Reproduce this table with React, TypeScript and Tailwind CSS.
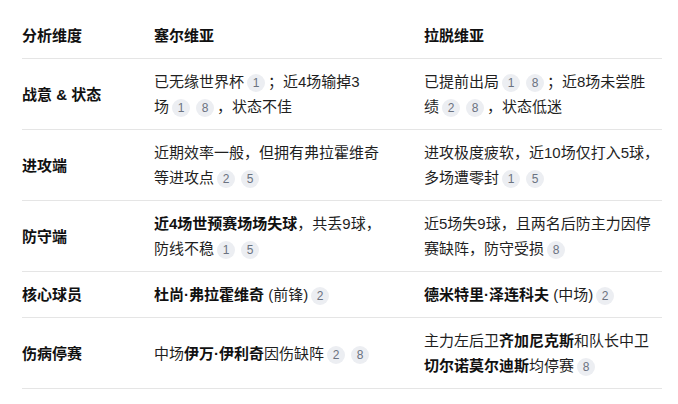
import React from "react";

const Badge = ({ n }: { n: string }) => (
  <span className="mx-[3px] inline-block h-[18px] w-[18px] rounded-full bg-[#eceef2] text-center align-middle text-[12px] leading-[18px] text-[#6b7280]">
    {n}
  </span>
);

const Cite = ({ pre, ns, post }: { pre: string; ns: string[]; post?: string }) => (
  <span className="whitespace-nowrap">
    {pre}
    {ns.map((n, i) => (
      <Badge key={i} n={n} />
    ))}
    {post}
  </span>
);

const Th = ({ children, cls = "" }: { children: React.ReactNode; cls?: string }) => (
  <th className={`py-[10px] text-left align-middle font-bold text-[#111] ${cls}`}>{children}</th>
);

const Td = ({ children, cls = "" }: { children: React.ReactNode; cls?: string }) => (
  <td className={`py-[10px] align-middle ${cls}`}>{children}</td>
);

export default function App() {
  const rowCls = "border-b border-[#e5e5e5]";
  return (
    <div
      className="min-h-[404px] bg-white pl-[22px] pt-[13px] text-[15px] leading-[25px] text-[#1f1f1f]"
      style={{ fontFamily: '"Liberation Sans", "Noto Sans CJK SC", sans-serif' }}
    >
      <table className="w-[640px] table-fixed border-collapse">
        <colgroup>
          <col className="w-[132px]" />
          <col className="w-[270px]" />
          <col className="w-[238px]" />
        </colgroup>
        <thead>
          <tr className={rowCls}>
            <Th>分析维度</Th>
            <Th cls="pr-[40px]">塞尔维亚</Th>
            <Th>拉脱维亚</Th>
          </tr>
        </thead>
        <tbody>
          <tr className={rowCls}>
            <Td cls="font-bold text-[#111]">战意 &amp; 状态</Td>
            <Td cls="pr-[40px]">
              已无缘世界杯<Badge n="1" />；近4场输掉3<Cite pre="场" ns={["1", "8"]} post="，" />状态不佳
            </Td>
            <Td>
              已提前出局<Badge n="1" />
              <Badge n="8" />；近8场未尝胜<Cite pre="绩" ns={["2", "8"]} post="，" />状态低迷
            </Td>
          </tr>
          <tr className={rowCls}>
            <Td cls="font-bold text-[#111]">进攻端</Td>
            <Td cls="pr-[40px]">
              近期效率一般，但拥有弗拉霍维奇等进攻<Cite pre="点" ns={["2", "5"]} />
            </Td>
            <Td>
              进攻极度疲软，近10场仅打入5球，多场遭零<Cite pre="封" ns={["1", "5"]} />
            </Td>
          </tr>
          <tr className={rowCls}>
            <Td cls="font-bold text-[#111]">防守端</Td>
            <Td cls="pr-[40px]">
              <strong className="font-bold text-[#111]">近4场世预赛场场失球</strong>，共丢9球，防线不<Cite pre="稳" ns={["1", "5"]} />
            </Td>
            <Td>
              近5场失9球，且两名后防主力因停赛缺阵，防守受<Cite pre="损" ns={["8"]} />
            </Td>
          </tr>
          <tr className={rowCls}>
            <Td cls="font-bold text-[#111]">核心球员</Td>
            <Td cls="pr-[40px]">
              <strong className="font-bold text-[#111]">杜尚·弗拉霍维奇</strong> (前锋)<Badge n="2" />
            </Td>
            <Td>
              <strong className="font-bold text-[#111]">德米特里·泽连科夫</strong> (中场)<Badge n="2" />
            </Td>
          </tr>
          <tr className={rowCls}>
            <Td cls="font-bold text-[#111]">伤病停赛</Td>
            <Td cls="pr-[40px]">
              中场<strong className="font-bold text-[#111]">伊万·伊利奇</strong>因伤缺<Cite pre="阵" ns={["2", "8"]} />
            </Td>
            <Td>
              主力左后卫<strong className="font-bold text-[#111]">齐加尼克斯</strong>和队长中卫
              <strong className="font-bold text-[#111]">切尔诺莫尔迪斯</strong>均停<Cite pre="赛" ns={["8"]} />
            </Td>
          </tr>
        </tbody>
      </table>
    </div>
  );
}
